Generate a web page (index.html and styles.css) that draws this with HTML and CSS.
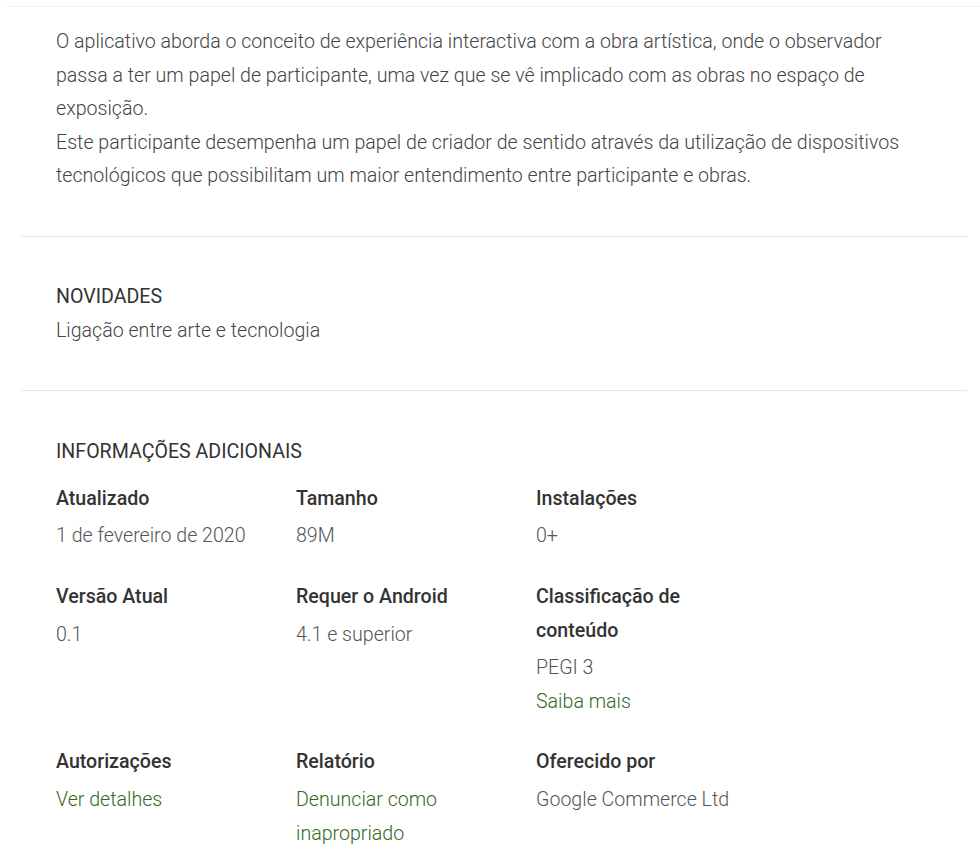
FILE: index.html
```html
<!DOCTYPE html>
<html lang="pt">
<head>
  <meta charset="UTF-8" />
  <meta name="viewport" content="width=device-width, initial-scale=1">
  <title>Detalhes do aplicativo</title>
  <link rel="stylesheet" href="styles.css">
</head>
<body>

<div class="top-rule"></div>

<div class="section description">
  <p>O aplicativo aborda o conceito de experiência interactiva com a obra artística, onde o observador passa a ter um papel de participante, uma vez que se vê implicado com as obras no espaço de exposição.<br>
  Este participante desempenha um papel de criador de sentido através da utilização de dispositivos tecnológicos que possibilitam um maior entendimento entre participante e obras.</p>
</div>

<div class="section">
  <h2>NOVIDADES</h2>
  <p>Ligação entre arte e tecnologia</p>
</div>

<div class="section info">
  <h2>INFORMAÇÕES ADICIONAIS</h2>
  <div class="info-grid">
    <div class="info-item">
      <div class="info-label">Atualizado</div>
      <div class="info-value">1 de fevereiro de 2020</div>
    </div>
    <div class="info-item">
      <div class="info-label">Tamanho</div>
      <div class="info-value">89M</div>
    </div>
    <div class="info-item">
      <div class="info-label">Instalações</div>
      <div class="info-value">0+</div>
    </div>

    <div class="info-item">
      <div class="info-label">Versão Atual</div>
      <div class="info-value">0.1</div>
    </div>
    <div class="info-item">
      <div class="info-label">Requer o Android</div>
      <div class="info-value">4.1 e superior</div>
    </div>
    <div class="info-item">
      <div class="info-label">Classificação de conteúdo</div>
      <div class="info-value">PEGI 3</div>
      <div class="info-value"><a href="#">Saiba mais</a></div>
    </div>

    <div class="info-item">
      <div class="info-label">Autorizações</div>
      <div class="info-value"><a href="#">Ver detalhes</a></div>
    </div>
    <div class="info-item">
      <div class="info-label">Relatório</div>
      <div class="info-value"><a href="#">Denunciar como inapropriado</a></div>
    </div>
    <div class="info-item">
      <div class="info-label">Oferecido por</div>
      <div class="info-value">Google Commerce Ltd</div>
    </div>
  </div>
</div>

</body>
</html>
```

FILE: styles.css
```css
body {
  font-family: Roboto, 'Liberation Sans', sans-serif;
  background-color: #fff;
  color: #444;
  margin: 0;
  padding: 0;
  font-size: 19.6px;
  line-height: 33.6px;
}

.top-rule {
  margin: 6px 0 0 6px;
  border-top: 1px solid #f3f5f5;
}

.section {
  margin: 0 13px 0 21px;
  padding: 43px 35px 43px;
  border-bottom: 1px solid #e6e6e6;
}

.section.description {
  padding-top: 18px;
}

.section.info {
  padding-top: 44px;
  border-bottom: none;
}

p {
  margin: 0;
  font-weight: 300;
}

h2 {
  margin: 0;
  font-size: 19.6px;
  font-weight: 400;
  color: #333;
}

.info-grid {
  display: grid;
  grid-template-columns: repeat(3, 240px);
  row-gap: 27px;
  margin-top: 13px;
}

.info-label {
  font-weight: 500;
  color: #333;
  width: 180px;
}

.info-value {
  font-weight: 300;
  color: #555;
  margin-top: 4px;
}

.info-value + .info-value {
  margin-top: 0;
}

.info-value a {
  color: #33691e;
  text-decoration: none;
}

.info-item .info-value a:hover {
  text-decoration: underline;
}
```
